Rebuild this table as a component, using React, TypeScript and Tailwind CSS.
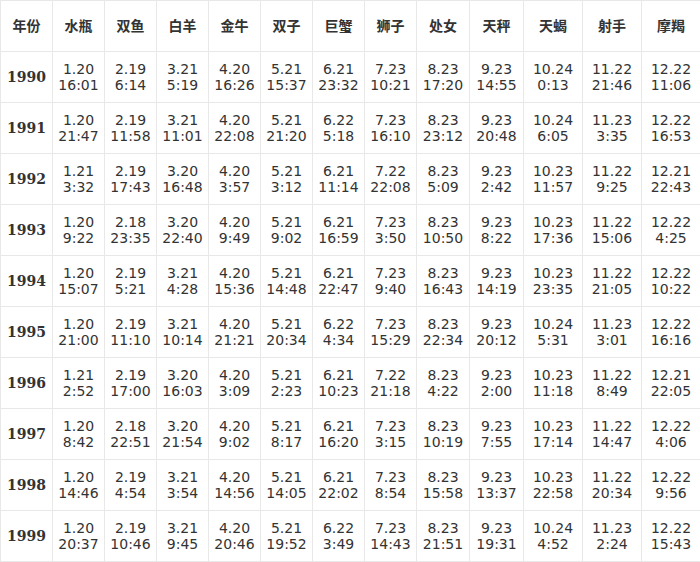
import React from "react";

const signs = ["水瓶", "双鱼", "白羊", "金牛", "双子", "巨蟹", "狮子", "处女", "天秤", "天蝎", "射手", "摩羯"];

const widths = ["w-[52px]", "w-[52px]", "w-[52px]", "w-[52px]", "w-[52px]", "w-[52px]", "w-[52px]", "w-[52px]", "w-[53px]", "w-[54px]", "w-[59px]", "w-[59px]", "w-[59px]"];

const rows: [string, string][] = [
	["1990", "1.20 16:01|2.19 6:14|3.21 5:19|4.20 16:26|5.21 15:37|6.21 23:32|7.23 10:21|8.23 17:20|9.23 14:55|10.24 0:13|11.22 21:46|12.22 11:06"],
	["1991", "1.20 21:47|2.19 11:58|3.21 11:01|4.20 22:08|5.21 21:20|6.22 5:18|7.23 16:10|8.23 23:12|9.23 20:48|10.24 6:05|11.23 3:35|12.22 16:53"],
	["1992", "1.21 3:32|2.19 17:43|3.20 16:48|4.20 3:57|5.21 3:12|6.21 11:14|7.22 22:08|8.23 5:09|9.23 2:42|10.23 11:57|11.22 9:25|12.21 22:43"],
	["1993", "1.20 9:22|2.18 23:35|3.20 22:40|4.20 9:49|5.21 9:02|6.21 16:59|7.23 3:50|8.23 10:50|9.23 8:22|10.23 17:36|11.22 15:06|12.22 4:25"],
	["1994", "1.20 15:07|2.19 5:21|3.21 4:28|4.20 15:36|5.21 14:48|6.21 22:47|7.23 9:40|8.23 16:43|9.23 14:19|10.23 23:35|11.22 21:05|12.22 10:22"],
	["1995", "1.20 21:00|2.19 11:10|3.21 10:14|4.20 21:21|5.21 20:34|6.22 4:34|7.23 15:29|8.23 22:34|9.23 20:12|10.24 5:31|11.23 3:01|12.22 16:16"],
	["1996", "1.21 2:52|2.19 17:00|3.20 16:03|4.20 3:09|5.21 2:23|6.21 10:23|7.22 21:18|8.23 4:22|9.23 2:00|10.23 11:18|11.22 8:49|12.21 22:05"],
	["1997", "1.20 8:42|2.18 22:51|3.20 21:54|4.20 9:02|5.21 8:17|6.21 16:20|7.23 3:15|8.23 10:19|9.23 7:55|10.23 17:14|11.22 14:47|12.22 4:06"],
	["1998", "1.20 14:46|2.19 4:54|3.21 3:54|4.20 14:56|5.21 14:05|6.21 22:02|7.23 8:54|8.23 15:58|9.23 13:37|10.23 22:58|11.22 20:34|12.22 9:56"],
	["1999", "1.20 20:37|2.19 10:46|3.21 9:45|4.20 20:46|5.21 19:52|6.22 3:49|7.23 14:43|8.23 21:51|9.23 19:31|10.24 4:52|11.23 2:24|12.22 15:43"],
];

export default function App() {
	return (
		<div className="w-[700px] h-[562px] bg-white text-[#333] font-['DejaVu_Sans','Noto_Sans_CJK_SC',sans-serif]">
			<table className="w-[700px] table-fixed border-collapse">
				<colgroup>
					{widths.map((w, i) => (
						<col key={i} className={w} />
					))}
				</colgroup>
				<thead>
					<tr className="h-[51px]">
						<th className="border border-[#e8e8e8] text-[14px] font-bold text-center align-middle">年份</th>
						{signs.map((s) => (
							<th key={s} className="border border-[#e8e8e8] text-[14px] font-bold text-center align-middle">
								{s}
							</th>
						))}
					</tr>
				</thead>
				<tbody>
					{rows.map(([year, data]) => (
						<tr key={year} className="h-[51px]">
							<td className="border border-[#e8e8e8] text-center align-middle font-['DejaVu_Serif',serif] font-bold text-[14px]">
								{year}
							</td>
							{data.split("|").map((cell, i) => {
								const [date, time] = cell.split(" ");
								return (
									<td key={i} className="border border-[#e8e8e8] text-center align-middle text-[14px] leading-[16px]">
										{date}
										<br />
										{time}
									</td>
								);
							})}
						</tr>
					))}
				</tbody>
			</table>
		</div>
	);
}
